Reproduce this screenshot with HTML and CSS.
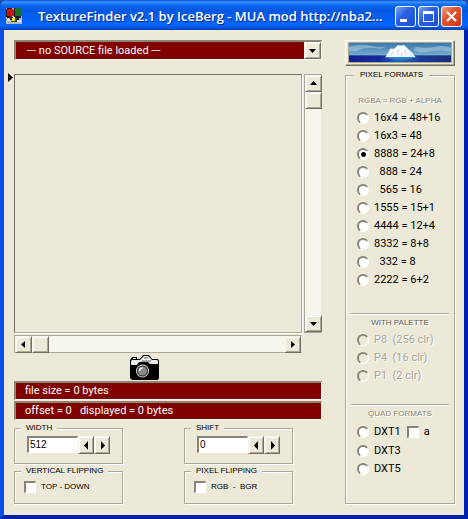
FILE: index.html
```html
<!DOCTYPE html>
<html lang="en">
<head>
<meta charset="utf-8">
<title>TextureFinder</title>
<link rel="stylesheet" href="styles.css">
</head>
<body>
<div class="window">
  <header class="titlebar">
    <svg class="app-icon" viewBox="0 0 16 16" shape-rendering="crispEdges" aria-hidden="true">
      <rect width="16" height="16" fill="#b4b8c4"/>
      <path d="M8 0h8v8H8z" fill="#18702c"/>
      <path d="M8 0h1v9H8z" fill="#10141c"/>
      <path d="M1 1h6v1h1v6H6v1H3V8H1z" fill="#c81c14"/>
      <path d="M0 1h1v8H0zM1 0h5v1H1zM1 8h3v2H1zM3 3h1v4H3z" fill="#301018"/>
      <path d="M4 9h3v3H4zM9 8h6v2h-2v2H9z" fill="#202034"/>
      <path d="M6 10h4v4H6z" fill="#f4e418"/>
      <path d="M9 10h2v4H9zM5 13h4v1H5z" fill="#484820"/>
      <path d="M1 11h3v2H1zM11 12h4v2h-4z" fill="#e4e4ec"/>
      <path d="M7 9h2v1H7z" fill="#fff"/>
    </svg>
    <h1 class="title">TextureFinder v2.1 by IceBerg - MUA mod http://nba2...</h1>
    <div class="caption-buttons">
      <button class="caption" type="button" aria-label="Minimize"><svg viewBox="0 0 19 19"><path d="M4 12h7v3H4z" fill="#fff"/></svg></button>
      <button class="caption" type="button" aria-label="Maximize"><svg viewBox="0 0 19 19"><path d="M4 4h11v11H4zM5 7v7h9V7z" fill="#fff" fill-rule="evenodd"/></svg></button>
      <button class="caption close" type="button" aria-label="Close"><svg viewBox="0 0 19 19"><path d="M5 5l9 9M14 5l-9 9" stroke="#fff" stroke-width="2.2"/></svg></button>
    </div>
  </header>

  <main class="client">
    <div class="left">
      <div class="source">
        <select class="source-select" aria-label="Source file"><option>--- no SOURCE file loaded ---</option></select>
        <span class="btn source-arrow"><svg class="arrow" viewBox="0 0 9 9"><path d="M1 3h7L4.500 7z"/></svg></span>
      </div>

      <div class="viewer">
        <svg class="marker" viewBox="0 0 5 9" aria-hidden="true"><path d="M0 0l5 4.500L0 9z"/></svg>
        <div class="canvas"></div>
        <div class="scroll vertical">
          <button class="btn" type="button" aria-label="Scroll up"><svg class="arrow" viewBox="0 0 9 9"><path d="M1 6h7L4.500 2z"/></svg></button>
          <div class="btn thumb"></div>
          <button class="btn end" type="button" aria-label="Scroll down"><svg class="arrow" viewBox="0 0 9 9"><path d="M1 3h7L4.500 7z"/></svg></button>
        </div>
        <div class="scroll horizontal">
          <button class="btn" type="button" aria-label="Scroll left"><svg class="arrow" viewBox="0 0 9 9"><path d="M6 1v7L2 4.500z"/></svg></button>
          <div class="btn thumb"></div>
          <button class="btn end" type="button" aria-label="Scroll right"><svg class="arrow" viewBox="0 0 9 9"><path d="M3 1v7l4-3.500z"/></svg></button>
        </div>
      </div>

      <button class="camera" type="button" aria-label="Take snapshot">
        <svg viewBox="0 0 30 25">
          <path d="M1 4l1-2h5v2h3l3-4h6l3 4h6l1 2v17l-1 2H2l-2-2V5z" fill="#000"/>
          <path d="M3 3h3v1H3zM2 5h8l4-4h4l4 4h5l1 1v3h-8l-2-2h-9L7 10H1V6z" fill="#e8e8e0"/>
          <path d="M12 4l2-2h4l2 2v2h-8z" fill="#fff"/>
          <path d="M12 6h9M14 3h4" stroke="#555" fill="none"/>
          <path d="M22 6h5M2 7h5" stroke="#fff" fill="none"/>
          <circle cx="12.500" cy="16" r="7.500" fill="#000"/>
          <circle cx="12.500" cy="16" r="6.500" fill="#d8d8d4"/>
          <circle cx="12.500" cy="16" r="5.500" fill="#222"/>
          <circle cx="12.500" cy="16" r="4.600" fill="#888"/>
          <path d="M9.500 16c0-2 1-3 3-3" stroke="#fff" stroke-width="1.400" fill="none"/>
        </svg>
      </button>

      <div class="status">file size = 0 bytes</div>
      <div class="status">offset = 0 &nbsp; displayed = 0 bytes</div>

      <div class="groups">
        <fieldset class="group number">
          <legend><label for="width">WIDTH</label></legend>
          <div class="stepper">
            <input id="width" class="field" type="text" value="512">
            <button class="btn" type="button" aria-label="Decrease width"><svg class="arrow" viewBox="0 0 9 9"><path d="M6 0v9L2 4.500z"/></svg></button>
            <button class="btn" type="button" aria-label="Increase width"><svg class="arrow" viewBox="0 0 9 9"><path d="M3 0v9l4-4.500z"/></svg></button>
          </div>
        </fieldset>
        <fieldset class="group number">
          <legend><label for="shift">SHIFT</label></legend>
          <div class="stepper">
            <input id="shift" class="field" type="text" value="0">
            <button class="btn" type="button" aria-label="Decrease shift"><svg class="arrow" viewBox="0 0 9 9"><path d="M6 0v9L2 4.500z"/></svg></button>
            <button class="btn" type="button" aria-label="Increase shift"><svg class="arrow" viewBox="0 0 9 9"><path d="M3 0v9l4-4.500z"/></svg></button>
          </div>
        </fieldset>
        <fieldset class="group flip">
          <legend>VERTICAL FLIPPING</legend>
          <label class="check"><input type="checkbox">TOP - DOWN</label>
        </fieldset>
        <fieldset class="group flip">
          <legend>PIXEL FLIPPING</legend>
          <label class="check"><input type="checkbox">RGB&nbsp; -&nbsp; BGR</label>
        </fieldset>
      </div>
    </div>

    <div class="right">
      <button class="banner" type="button" aria-label="About">
        <svg viewBox="0 0 104 20" preserveAspectRatio="none">
          <defs>
            <linearGradient id="sky" x1="0" y1="0" x2="0" y2="1"><stop offset="0" stop-color="#3878ac"/><stop offset="1" stop-color="#80b4d4"/></linearGradient>
            <linearGradient id="sea" x1="0" y1="0" x2="1" y2="0"><stop offset="0" stop-color="#14208c"/><stop offset=".3" stop-color="#142c94"/><stop offset=".5" stop-color="#1c6cb8"/><stop offset=".7" stop-color="#183c94"/><stop offset="1" stop-color="#1c2c78"/></linearGradient>
          </defs>
          <rect width="104" height="15" fill="url(#sky)"/>
          <path d="M0 4q12-4 22-1t16 0l-5 3q-16-2-22 1T0 8zM68 4q12 2 20 0t16 1v4q-12-2-22 0t-16-2z" fill="#c4dce8" opacity=".45"/>
          <rect y="13" width="104" height="7" fill="url(#sea)"/>
          <path d="M37 15l3-5 2-4 4 0 4-4 3 1 3-1 4 4 4 4 4 5z" fill="#f8fcfc"/>
          <path d="M45 9l-3 5M51 6l-2 6M57 7l2 6M54 10l-1 4M62 11l2 3" stroke="#b4ccd8" stroke-width=".8"/>
          <path d="M38 15h30l-8 3H46z" fill="#2c84c4" opacity=".7"/>
        </svg>
      </button>

      <fieldset class="group formats">
        <legend>PIXEL FORMATS</legend>
        <div class="caption-text first">RGBA = RGB + ALPHA</div>
        <label class="radio"><input type="radio" name="fmt">16x4 = 48+16</label>
        <label class="radio"><input type="radio" name="fmt">16x3 = 48</label>
        <label class="radio"><input type="radio" name="fmt" checked>8888 = 24+8</label>
        <label class="radio"><input type="radio" name="fmt">&nbsp; 888 = 24</label>
        <label class="radio"><input type="radio" name="fmt">&nbsp; 565 = 16</label>
        <label class="radio"><input type="radio" name="fmt">1555 = 15+1</label>
        <label class="radio"><input type="radio" name="fmt">4444 = 12+4</label>
        <label class="radio"><input type="radio" name="fmt">8332 = 8+8</label>
        <label class="radio"><input type="radio" name="fmt">&nbsp; 332 = 8</label>
        <label class="radio"><input type="radio" name="fmt">2222 = 6+2</label>
        <div class="section">
          <div class="caption-text strong">WITH PALETTE</div>
          <label class="radio off"><input type="radio" name="fmt" disabled>P8&nbsp; (256 clr)</label>
          <label class="radio off"><input type="radio" name="fmt" disabled>P4&nbsp; (16 clr)</label>
          <label class="radio off"><input type="radio" name="fmt" disabled>P1&nbsp; (2 clr)</label>
        </div>
        <div class="section">
          <div class="caption-text">QUAD FORMATS</div>
          <div class="row">
            <label class="radio"><input type="radio" name="fmt">DXT1</label>
            <label class="radio"><input type="checkbox">a</label>
          </div>
          <label class="radio"><input type="radio" name="fmt">DXT3</label>
          <label class="radio"><input type="radio" name="fmt">DXT5</label>
        </div>
      </fieldset>
    </div>
  </main>
</div>
</body>
</html>
```
FILE: styles.css
```css
:root {
  --face: #ece9d8;
  --shade: #aca899;
  --dark: #716f64;
  --maroon: #800000;
}

* { box-sizing: border-box; }

body {
  margin: 0;
  background: #1c4fa8;
  font: 11px/18px Roboto, "Liberation Sans", sans-serif;
  color: #000;
}

button, input, select { font: inherit; color: inherit; margin: 0; padding: 0; }
svg { display: block; }

.window {
  min-height: 100vh;
  display: flex;
  flex-direction: column;
  border: solid #0842d8;
  border-width: 0 4px 4px;
  border-color: #0842d8 #0020b0 #0020a8 #0850e8;
  border-radius: 7px 7px 0 0;
  background: var(--face);
}

.titlebar {
  display: flex;
  align-items: center;
  height: 30px;
  margin: 0 -4px;
  padding: 2px 6px 0;
  border-radius: 7px 7px 0 0;
  background: linear-gradient(#0850d0 0, #3c94ff 2px, #0c68f0 5px, #0458e0 10px, #0460f4 20px, #0468ff 25px, #0450d8 28px, #0440b8 30px);
}

.app-icon { width: 16px; height: 16px; flex: none; }

.title {
  flex: 1;
  min-width: 0;
  margin: 0 0 0 16px;
  overflow: hidden;
  white-space: nowrap;
  font: 600 13px/20px "Open Sans", sans-serif;
  color: #fff;
  text-shadow: 1px 1px #0c2c84;
}

.caption-buttons { display: flex; gap: 2px; }

.caption {
  width: 21px;
  height: 21px;
  border: 1px solid #fff;
  border-radius: 3px;
  background: linear-gradient(135deg, #7ca4f4, #2c60e4 40%, #2458dc 70%, #1c4cc8);
}

.caption.close { background: linear-gradient(135deg, #f0a088, #e05430 40%, #d84820 70%, #b83410); }

.client {
  flex: 1;
  display: grid;
  grid-template-columns: minmax(0, 1fr) 110px;
  gap: 23px;
  padding: 10px 9px 11px 10px;
}

.left, .right { display: flex; flex-direction: column; min-width: 0; }

.btn {
  flex: none;
  display: grid;
  place-items: center;
  border: 1px solid;
  border-color: #f4f2e8 var(--dark) var(--dark) #f4f2e8;
  background: var(--face);
  box-shadow: inset 1px 1px #fff, inset -1px -1px var(--shade);
}

.arrow { width: 9px; height: 9px; }

.source {
  position: relative;
  height: 20px;
  border: solid;
  border-width: 2px 1px 1px 2px;
  border-color: #8c8678 #fff #fff #8c8678;
}

.source-select {
  display: block;
  width: 100%;
  height: 17px;
  padding-left: 11px;
  border: 0;
  border-radius: 0;
  appearance: none;
  background: var(--maroon);
  color: #fff;
}

.source-arrow {
  position: absolute;
  top: 0;
  right: 0;
  width: 17px;
  height: 17px;
  pointer-events: none;
}

.viewer {
  position: relative;
  flex: 1;
  display: grid;
  grid-template: minmax(0, 1fr) 18px / minmax(0, 1fr) 18px;
  gap: 2px;
  margin-top: 14px;
}

.marker { position: absolute; left: -6px; top: -1px; width: 5px; height: 9px; }

.canvas {
  border: 1px solid var(--dark);
  border-color: var(--dark) var(--shade) var(--shade) var(--dark);
  box-shadow: 1px 1px #fff;
}

.scroll {
  display: flex;
  border: 1px solid var(--shade);
  border-color: var(--shade) var(--face) var(--shade) var(--shade);
  background: #f6f5ee;
}

.scroll .btn { width: 17px; height: 17px; }
.scroll .end { margin: auto 0 0 auto; }
.vertical { flex-direction: column; }
.vertical .end { margin-left: 0; }
.horizontal .end { margin-top: 0; }

.camera {
  align-self: center;
  width: 30px;
  height: 25px;
  margin: 2px 46px 1px 0;
  border: 0;
  background: none;
}

.status {
  height: 19px;
  margin-bottom: 1px;
  padding-left: 9px;
  border: solid;
  border-width: 2px 1px 1px 2px;
  border-color: #8c8678 #fff #fff #8c8678;
  background: var(--maroon);
  color: #fff;
  line-height: 16px;
}

.groups {
  display: grid;
  grid-template-columns: 109px 109px;
  gap: 2px 61px;
  margin-top: 2px;
}

.group {
  min-width: 0;
  margin: 0;
  padding: 0;
  border: 1px solid var(--shade);
  box-shadow: 1px 1px #fff, inset 1px 1px #fff;
}

.group legend {
  margin-left: 6px;
  padding: 0 5px;
  background: var(--face);
  font-family: "Liberation Sans", Arial, sans-serif;
  font-size: 8px;
  line-height: 10px;
  white-space: nowrap;
}

.number { height: 41px; }
.stepper { display: flex; padding: 3px 12px; }
.stepper .btn { width: 16px; height: 18px; }

.field {
  flex: 1;
  min-width: 0;
  height: 17px;
  padding-left: 1px;
  border: solid;
  border-width: 2px 1px 1px 2px;
  border-color: #86837a #fff #fff #86837a;
  border-radius: 0;
  background: #fff;
  font-family: "Liberation Sans", Arial, sans-serif;
  font-size: 10px;
}

.flip { height: 38px; }

.check {
  display: flex;
  align-items: center;
  gap: 5px;
  padding: 4px 9px;
  font-family: "Liberation Sans", Arial, sans-serif;
  font-size: 8px;
  line-height: 13px;
}

input[type="checkbox"], input[type="radio"] {
  flex: none;
  width: 12px;
  height: 12px;
  appearance: none;
  border: solid;
  border-width: 2px 1px 1px 2px;
  border-color: #86837a #fff #fff #86837a;
  background: #fff;
}

input[type="radio"] { border-radius: 50%; }
input[type="radio"]:checked { background: radial-gradient(circle, #000 2px, #fff 3px); }
input[type="radio"]:disabled { background: var(--face); }

.banner {
  height: 26px;
  padding: 1px 2px 2px;
  border: 1px solid;
  border-color: #fff var(--dark) var(--dark) #fff;
  background: var(--face);
  box-shadow: inset -1px -1px var(--shade);
}

.banner svg { width: 100%; height: 21px; border: 1px solid var(--shade); }

.formats { flex: 1; margin-top: 4px; padding: 16px 5px 0; }
.group.formats legend { margin-left: 3px; padding: 0 6px; }

.caption-text {
  font-family: "Liberation Sans", Arial, sans-serif;
  font-size: 8px;
  line-height: 10px;
  text-align: center;
  color: #8c897c;
  text-shadow: 1px 1px #fff;
}

.caption-text.first { margin-bottom: 3px; }
.caption-text.strong { color: #65625a; }

.radio { display: flex; align-items: center; gap: 5px; height: 18px; padding-left: 6px; white-space: nowrap; }
.radio.off { color: var(--shade); text-shadow: 1px 1px #fff; }

.section {
  margin-top: 24px;
  padding-top: 4px;
  border-top: 1px solid var(--shade);
  box-shadow: inset 0 1px #fff;
}

.section + .section { margin-top: 19px; }
.section .caption-text { margin-bottom: 3px; }
.section .row { display: flex; margin: 4px 0 1px; }
```
